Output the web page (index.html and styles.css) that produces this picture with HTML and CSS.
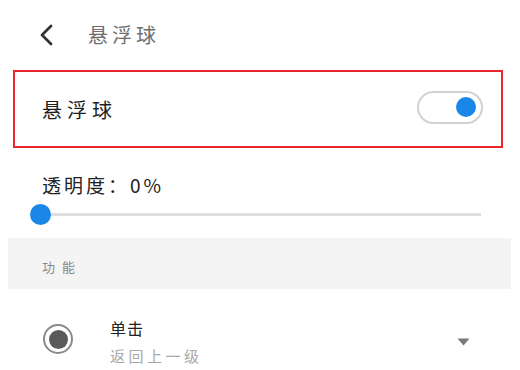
FILE: index.html
```html
<!DOCTYPE html>
<html lang="zh">
<head>
<meta charset="utf-8">
<link rel="stylesheet" href="styles.css">
</head>
<body>
<div class="page">
  <header class="header">
    <svg class="back" width="16" height="22" viewBox="0 0 16 22"><path d="M13 2 L4 11 L13 20" fill="none" stroke="#333" stroke-width="2.8" stroke-linecap="round" stroke-linejoin="round"/></svg>
    <span class="title">悬浮球</span>
  </header>

  <div class="card">
    <span class="card-label">悬浮球</span>
    <div class="switch"><div class="knob"></div></div>
  </div>

  <div class="opacity-label">透明度：0%</div>
  <div class="slider">
    <div class="track"></div>
    <div class="thumb"></div>
  </div>

  <div class="section">功能</div>

  <div class="item">
    <div class="radio"><div class="radio-dot"></div></div>
    <div class="item-text">
      <div class="item-title">单击</div>
      <div class="item-sub">返回上一级</div>
    </div>
    <svg class="caret" width="13" height="8" viewBox="0 0 13 8"><path d="M0.5 0.5 L12.5 0.5 L6.5 7.5 Z" fill="#7a7a7a"/></svg>
  </div>
</div>
</body>
</html>
```
FILE: styles.css
```css
* { box-sizing: border-box; }
html, body {
  margin: 0;
  padding: 0;
  background: #fff;
}
body {
  font-family: "Noto Sans CJK SC", "Noto Sans", sans-serif;
  width: 520px;
  height: 370px;
  overflow: hidden;
}
.page {
  width: 520px;
  height: 370px;
  display: flex;
  flex-direction: column;
}
.header {
  display: flex;
  align-items: center;
  height: 70px;
  padding-left: 38px;
}
.back { display: block; }
.title {
  margin-left: 34px;
  font-size: 20px;
  letter-spacing: 4px;
  color: #6e6e6e;
  line-height: 24px;
}
.card {
  margin: 0 17px 0 13px;
  height: 78px;
  border: 2px solid #e8262d;
  display: flex;
  align-items: center;
  padding: 0 18px 0 27px;
}
.card-label {
  font-size: 20px;
  letter-spacing: 5px;
  color: #1e1e1e;
  line-height: 24px;
  margin-top: 2px;
}
.switch {
  margin-left: auto;
  width: 66px;
  height: 33px;
  border: 2px solid #d2d2d2;
  border-radius: 17px;
  background: #fff;
  display: flex;
  align-items: center;
  justify-content: flex-end;
  padding-right: 5px;
  margin-top: -4px;
}
.knob {
  width: 20px;
  height: 20px;
  border-radius: 50%;
  background: #1a87e8;
}
.opacity-label {
  margin-top: 22px;
  padding-left: 42px;
  height: 30px;
  line-height: 30px;
  font-size: 19px;
  letter-spacing: 3px;
  color: #222;
}
.slider {
  position: relative;
  margin: 4px 0 0 30px;
  width: 461px;
  height: 20px;
  padding: 0 10px;
  display: flex;
  align-items: center;
}
.track {
  width: 100%;
  height: 3px;
  background: #dedede;
}
.thumb {
  position: absolute;
  left: 0;
  top: 0;
  width: 21px;
  height: 21px;
  border-radius: 50%;
  background: #1a87e8;
}
.section {
  margin: 14px 9px 0 8px;
  height: 51px;
  background: #f4f4f4;
  padding: 6px 0 0 34px;
  display: flex;
  align-items: center;
  font-size: 13px;
  letter-spacing: 7px;
  color: #8a8a8a;
}
.item {
  display: flex;
  align-items: flex-start;
  padding: 28px 0 0 43px;
}
.radio {
  margin-top: 7px;
  width: 30px;
  height: 30px;
  border-radius: 50%;
  border: 2px solid #8a8a8a;
  display: flex;
  align-items: center;
  justify-content: center;
}
.radio-dot {
  width: 19px;
  height: 19px;
  border-radius: 50%;
  background: #5a5a5a;
}
.item-text {
  margin-left: 37px;
}
.item-title {
  font-size: 16px;
  letter-spacing: 1px;
  line-height: 22px;
  color: #222;
}
.item-sub {
  margin-top: 6px;
  font-size: 15px;
  letter-spacing: 3.5px;
  line-height: 22px;
  color: #a8a8a8;
}
.caret {
  display: block;
  margin: 21px 50px 0 auto;
}
```
